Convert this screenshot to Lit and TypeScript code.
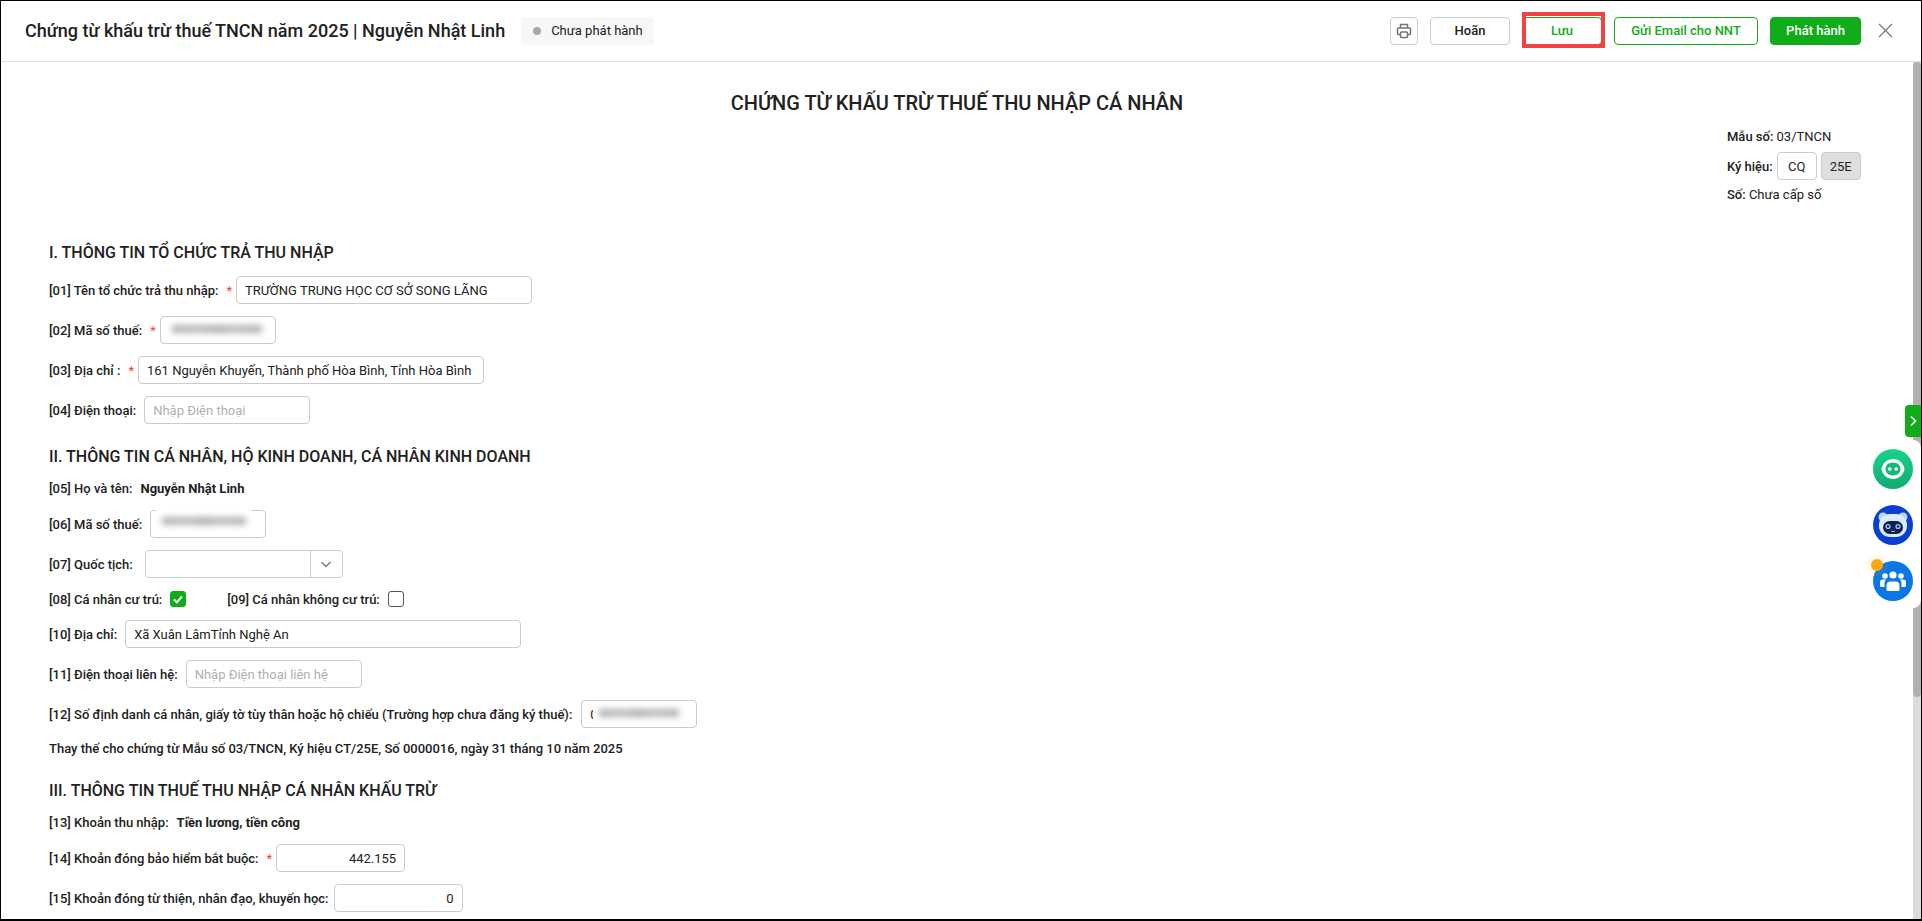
import { LitElement, html, css } from "lit";
import { customElement } from "lit/decorators.js";

@customElement("app-root")
export class AppRoot extends LitElement {
  static styles = css`
    :host {
      display: block;
      width: 1922px;
      height: 921px;
      overflow: hidden;
      font-family: Roboto, "Noto Sans", sans-serif;
      font-size: 13px;
      color: #212121;
      background: #fff;
    }
    .frame {
      position: relative;
      box-sizing: border-box;
      height: 921px;
      border: 1px solid #000;
      border-bottom-width: 2px;
      display: flex;
      flex-direction: column;
      overflow: hidden;
    }
    .header {
      flex: 0 0 61px;
      box-sizing: border-box;
      border-bottom: 1px solid #e0e0e0;
      display: flex;
      align-items: center;
      padding: 0 28px 1px 24px;
    }
    .title {
      font-size: 18px;
      font-weight: 500;
    }
    .status {
      margin-left: 16px;
      height: 28px;
      padding: 0 11px 0 12px;
      background: #f7f7f7;
      border-radius: 4px;
      display: flex;
      align-items: center;
      gap: 10px;
      font-size: 13px;
    }
    .dot { width: 8px; height: 8px; border-radius: 50%; background: #a8a8a8; }
    .actions { margin-left: auto; display: flex; align-items: center; gap: 12px; }
    .btn {
      box-sizing: border-box;
      height: 28px;
      border: 1px solid #ccc;
      border-radius: 4px;
      display: flex;
      align-items: center;
      justify-content: center;
      font-weight: 500;
      font-size: 13px;
      background: #fff;
    }
    .print { width: 28px; }
    .hoan { width: 80px; }
    .luu { width: 80px; border-color: #10ac1a; color: #10ac1a; position: relative; }
    .luu::after {
      content: "";
      position: absolute;
      inset: -6px -4px -4px -1px;
      border: 4px solid #f44242;
    }
    .email { width: 144px; border-color: #10ac1a; color: #10ac1a; }
    .publish { width: 91px; background: #10ac1a; border-color: #10ac1a; color: #fff; }
    .close { width: 15px; height: 15px; margin-left: 5px; display: block; }
    .body {
      flex: 1;
      padding: 0 56px 0 48px;
      min-height: 0;
      overflow: hidden;
    }
    .doc-title {
      height: 44px;
      margin-top: 19px;
      display: flex;
      align-items: center;
      justify-content: center;
      font-size: 20px;
      font-weight: 500;
    }
    .meta { display: flex; flex-direction: column; align-items: flex-start; margin-left: 1678px; }
    .meta-row { display: flex; align-items: center; gap: 4px; white-space: nowrap; }
    .m1 { height: 22px; }
    .m2 { height: 28px; margin-top: 5px; }
    .m3 { height: 20px; margin-top: 4px; }
    .b { font-weight: 500; }
    .bold { font-weight: 700; }
    .field {
      box-sizing: border-box;
      flex: none;
      height: 28px;
      border: 1px solid #ccc;
      border-radius: 4px;
      display: flex;
      align-items: center;
      padding: 0 8px;
      background: #fff;
      white-space: nowrap;
    }
    .sym { width: 40px; justify-content: center; padding: 0; }
    .sym.off { background: #dedede; }
    h2 {
      margin: 23px 0 0;
      font-size: 16px;
      font-weight: 500;
      line-height: 20px;
    }
    .first { margin-top: 39px; }
    .row { display: flex; align-items: center; height: 28px; margin-top: 12px; white-space: nowrap; }
    .after-h { margin-top: 13px; }
    .check-row { height: 16px; margin-top: 13px; }
    .after-check { margin-top: 13px; }
    .star { color: #f44242; margin: 0 4px 0 8px; }
    .sep { margin-right: 8px; }
    .sep-nine { margin-right: 9px; }
    .sep-wide { margin-right: 12px; }
    .sep-tight { margin-right: 5px; }
    .gap-left { margin-left: 41px; }
    .ph { color: #b0b0b0; font-weight: 400; }
    .right { justify-content: flex-end; }
    .blur-wrap {
      background: #fff;
      height: 24px;
      margin: -2px 0 0 -3px;
      padding: 0 6px 0 6px;
      display: flex;
      align-items: center;
    }
    .blur {
      height: 8px;
      background: linear-gradient(90deg, #b0b0b0, #bcbcbc 30%, #aeaeae 50%, #bcbcbc 70%, #b0b0b0);
      filter: blur(3px);
    }
    .w90 { width: 90px; }
    .w84 { width: 84px; }
    .w80 { width: 80px; }
    .up4 { margin-top: -7px; }
    .after-zero { margin-left: -5px; }
    .line { height: 20px; display: flex; align-items: center; margin-top: 11px; white-space: nowrap; }
    .after-line { margin-top: 12px; }
    .note { margin-top: 10px; }
    .select { padding: 0; }
    .select .val { flex: 1; }
    .select .arrow {
      width: 31px;
      height: 100%;
      border-left: 1px solid #ccc;
      display: flex;
      align-items: center;
      justify-content: center;
    }
    .cb {
      width: 16px;
      height: 16px;
      box-sizing: border-box;
      border: 1px solid #555;
      border-radius: 3px;
      margin-left: 8px;
      display: flex;
      align-items: center;
      justify-content: center;
    }
    .cb.on { background: #10ac1a; border-color: #10ac1a; }
    .track {
      position: absolute;
      right: 0;
      top: 61px;
      bottom: 0;
      width: 8px;
      background: #dcdcdc;
    }
    .thumb {
      height: 635px;
      background: #b0b0b0;
      border-radius: 4px;
    }
    .float {
      position: absolute;
      right: 0;
      top: 439px;
      width: 56px;
      height: 168px;
      background: #fff;
      border-radius: 8px;
      display: flex;
      flex-direction: column;
      align-items: center;
      gap: 16px;
      padding-top: 9px;
      box-sizing: border-box;
    }
    .tab {
      position: absolute;
      right: 0;
      top: 404px;
      width: 16px;
      height: 32px;
      background: #10ac1a;
      border-radius: 4px 0 0 4px;
      display: flex;
      align-items: center;
      justify-content: center;
    }
    .orb { position: relative; width: 40px; height: 40px; display: block; flex: none; }
    .badge {
      position: absolute;
      left: -2px;
      top: -2px;
      width: 12px;
      height: 12px;
      background: #ffa70f;
      border-radius: 50%;
      box-shadow: 0 0 0 5px rgba(255, 167, 15, 0.08);
    }
  `;

  render() {
    return html`
      <div class="frame">
        <div class="header">
          <div class="title">Chứng từ khấu trừ thuế TNCN năm 2025 | Nguyễn Nhật Linh</div>
          <div class="status"><span class="dot"></span>Chưa phát hành</div>
          <div class="actions">
            <div class="btn print">
              <svg width="16" height="16" viewBox="0 0 16 16" fill="none" stroke="#757575" stroke-width="1.5">
                <path d="M4.500 5V1.500h7V5M4.500 11.500H2.500a1 1 0 0 1-1-1V6a1 1 0 0 1 1-1h11a1 1 0 0 1 1 1v4.500a1 1 0 0 1-1 1h-2" />
                <rect x="4.500" y="9" width="7" height="5.500" rx="1" />
              </svg>
            </div>
            <div class="btn hoan">Hoãn</div>
            <div class="btn luu">Lưu</div>
            <div class="btn email">Gửi Email cho NNT</div>
            <div class="btn publish">Phát hành</div>
            <svg class="close" viewBox="0 0 15 15" stroke="#757575" stroke-width="1.200"><path d="M1 1l13 13M14 1L1 14" /></svg>
          </div>
        </div>
        <div class="body">
          <div class="doc-title">CHỨNG TỪ KHẤU TRỪ THUẾ THU NHẬP CÁ NHÂN</div>
          <div class="meta">
            <div class="meta-row m1"><span><span class="b">Mẫu số:</span> 03/TNCN</span></div>
            <div class="meta-row m2">
              <span class="b">Ký hiệu:</span>
              <div class="field sym">CQ</div>
              <div class="field sym off">25E</div>
            </div>
            <div class="meta-row m3"><span><span class="b">Số:</span> Chưa cấp số</span></div>
          </div>
          <h2 class="first">I. THÔNG TIN TỔ CHỨC TRẢ THU NHẬP</h2>
          <div class="row after-h">
            <span class="b">[01] Tên tổ chức trả thu nhập:</span><span class="star">*</span>
            <div class="field" style="width:296px">TRƯỜNG TRUNG HỌC CƠ SỞ SONG LÃNG</div>
          </div>
          <div class="row">
            <span class="b">[02] Mã số thuế:</span><span class="star">*</span>
            <div class="field" style="width:116px"><div class="blur-wrap"><div class="blur w90"></div></div></div>
          </div>
          <div class="row">
            <span class="b">[03] Địa chỉ :</span><span class="star">*</span>
            <div class="field" style="width:346px">161 Nguyễn Khuyến, Thành phố Hòa Bình, Tỉnh Hòa Bình</div>
          </div>
          <div class="row">
            <span class="b sep">[04] Điện thoại:</span>
            <div class="field ph" style="width:166px">Nhập Điện thoại</div>
          </div>
          <h2>II. THÔNG TIN CÁ NHÂN, HỘ KINH DOANH, CÁ NHÂN KINH DOANH</h2>
          <div class="line"><span class="b sep">[05] Họ và tên:</span><span class="bold">Nguyễn Nhật Linh</span></div>
          <div class="row after-line">
            <span class="b sep">[06] Mã số thuế:</span>
            <div class="field" style="width:116px"><div class="blur-wrap up4"><div class="blur w84"></div></div></div>
          </div>
          <div class="row">
            <span class="b sep-wide">[07] Quốc tịch:</span>
            <div class="field select" style="width:198px">
              <div class="val"></div>
              <div class="arrow"><svg width="12" height="12" viewBox="0 0 12 12" fill="none" stroke="#757575" stroke-width="1.300"><path d="M1.500 4l4.500 4.500L10.500 4" /></svg></div>
            </div>
          </div>
          <div class="row check-row">
            <span class="b">[08] Cá nhân cư trú:</span>
            <span class="cb on"><svg width="12" height="12" viewBox="0 0 12 12" fill="none" stroke="#fff" stroke-width="2"><path d="M2 6.500l2.800 2.800L10 3.500" /></svg></span>
            <span class="b gap-left">[09] Cá nhân không cư trú:</span>
            <span class="cb"></span>
          </div>
          <div class="row after-check">
            <span class="b sep">[10] Địa chỉ:</span>
            <div class="field" style="width:396px">Xã Xuân LâmTỉnh Nghệ An</div>
          </div>
          <div class="row">
            <span class="b sep">[11] Điện thoại liên hệ:</span>
            <div class="field ph" style="width:176px">Nhập Điện thoại liên hệ</div>
          </div>
          <div class="row">
            <span class="b sep-nine">[12] Số định danh cá nhân, giấy tờ tùy thân hoặc hộ chiếu (Trường hợp chưa đăng ký thuế):</span>
            <div class="field" style="width:116px">0<div class="blur-wrap after-zero"><div class="blur w80"></div></div></div>
          </div>
          <div class="line b note">Thay thế cho chứng từ Mẫu số 03/TNCN, Ký hiệu CT/25E, Số 0000016, ngày 31 tháng 10 năm 2025</div>
          <h2>III. THÔNG TIN THUẾ THU NHẬP CÁ NHÂN KHẤU TRỪ</h2>
          <div class="line"><span class="b sep">[13] Khoản thu nhập:</span><span class="bold">Tiền lương, tiền công</span></div>
          <div class="row after-line">
            <span class="b">[14] Khoản đóng bảo hiểm bắt buộc:</span><span class="star">*</span>
            <div class="field right" style="width:129px">442.155</div>
          </div>
          <div class="row">
            <span class="b sep-tight">[15] Khoản đóng từ thiện, nhân đạo, khuyến học:</span>
            <div class="field right" style="width:129px">0</div>
          </div>
        </div>
        <div class="track"><div class="thumb"></div></div>
        <div class="tab"><svg width="8" height="12" viewBox="0 0 8 12" fill="none" stroke="#fff" stroke-width="1.600"><path d="M2 1.500L6.500 6 2 10.500" /></svg></div>
        <div class="float">
          <svg class="orb" viewBox="0 0 40 40">
            <defs><linearGradient id="g1" x1="0" y1="0" x2="0" y2="1"><stop offset="0" stop-color="#16d48a" /><stop offset="1" stop-color="#14aa72" /></linearGradient></defs>
            <circle cx="20" cy="20" r="20" fill="url(#g1)" />
            <path d="M8.500 20c1-6 6-10 11.500-10s10.500 4 11.500 10c-1 6-6 10-11.500 10S9.500 26 8.500 20z" fill="#fff" />
            <path d="M20 13.500c4.500 0 7.500 2.800 7.500 6.500s-3 6.500-7.500 6.500-7.500-2.800-7.500-6.500 3-6.500 7.500-6.500z" fill="#18b87c" />
            <circle cx="16.800" cy="20" r="1.800" fill="#fff" /><circle cx="23.200" cy="20" r="1.800" fill="#fff" />
          </svg>
          <svg class="orb" viewBox="0 0 40 40">
            <circle cx="20" cy="20" r="20" fill="#0a3fd0" />
            <circle cx="10" cy="12" r="4.500" fill="#bcd6f7" /><circle cx="30" cy="12" r="4.500" fill="#bcd6f7" />
            <rect x="6" y="9" width="28" height="23" rx="11" fill="#dcebfc" />
            <rect x="10" y="16" width="20" height="13" rx="6.500" fill="#12204f" />
            <circle cx="15" cy="21.500" r="2.600" fill="#9fc4ff" /><circle cx="25" cy="21.500" r="2.600" fill="#9fc4ff" />
            <circle cx="15" cy="21.500" r="1.200" fill="#12204f" /><circle cx="25" cy="21.500" r="1.200" fill="#12204f" />
            <path d="M18 26q2 1.500 4 0" stroke="#9fc4ff" fill="none" />
          </svg>
          <div class="orb">
            <svg class="orb" viewBox="0 0 40 40">
              <circle cx="20" cy="20" r="20" fill="#0b76e6" />
              <g fill="#fff">
                <circle cx="20" cy="14" r="3.600" /><circle cx="12" cy="15" r="2.800" /><circle cx="28" cy="15" r="2.800" />
                <path d="M13.500 28.500v-4a4 4 0 0 1 4-4h5a4 4 0 0 1 4 4v4a1.500 1.500 0 0 1-1.500 1.500h-10a1.500 1.500 0 0 1-1.500-1.500z" />
                <path d="M7 24.500v-3a3 3 0 0 1 3-3h3a6 6 0 0 0-1.500 4v3.500H8.500a1.500 1.500 0 0 1-1.500-1.500z" />
                <path d="M33 24.500v-3a3 3 0 0 0-3-3h-3a6 6 0 0 1 1.500 4v3.500h3a1.500 1.500 0 0 0 1.500-1.500z" />
              </g>
            </svg>
            <span class="badge"></span>
          </div>
        </div>
      </div>
    `;
  }
}
